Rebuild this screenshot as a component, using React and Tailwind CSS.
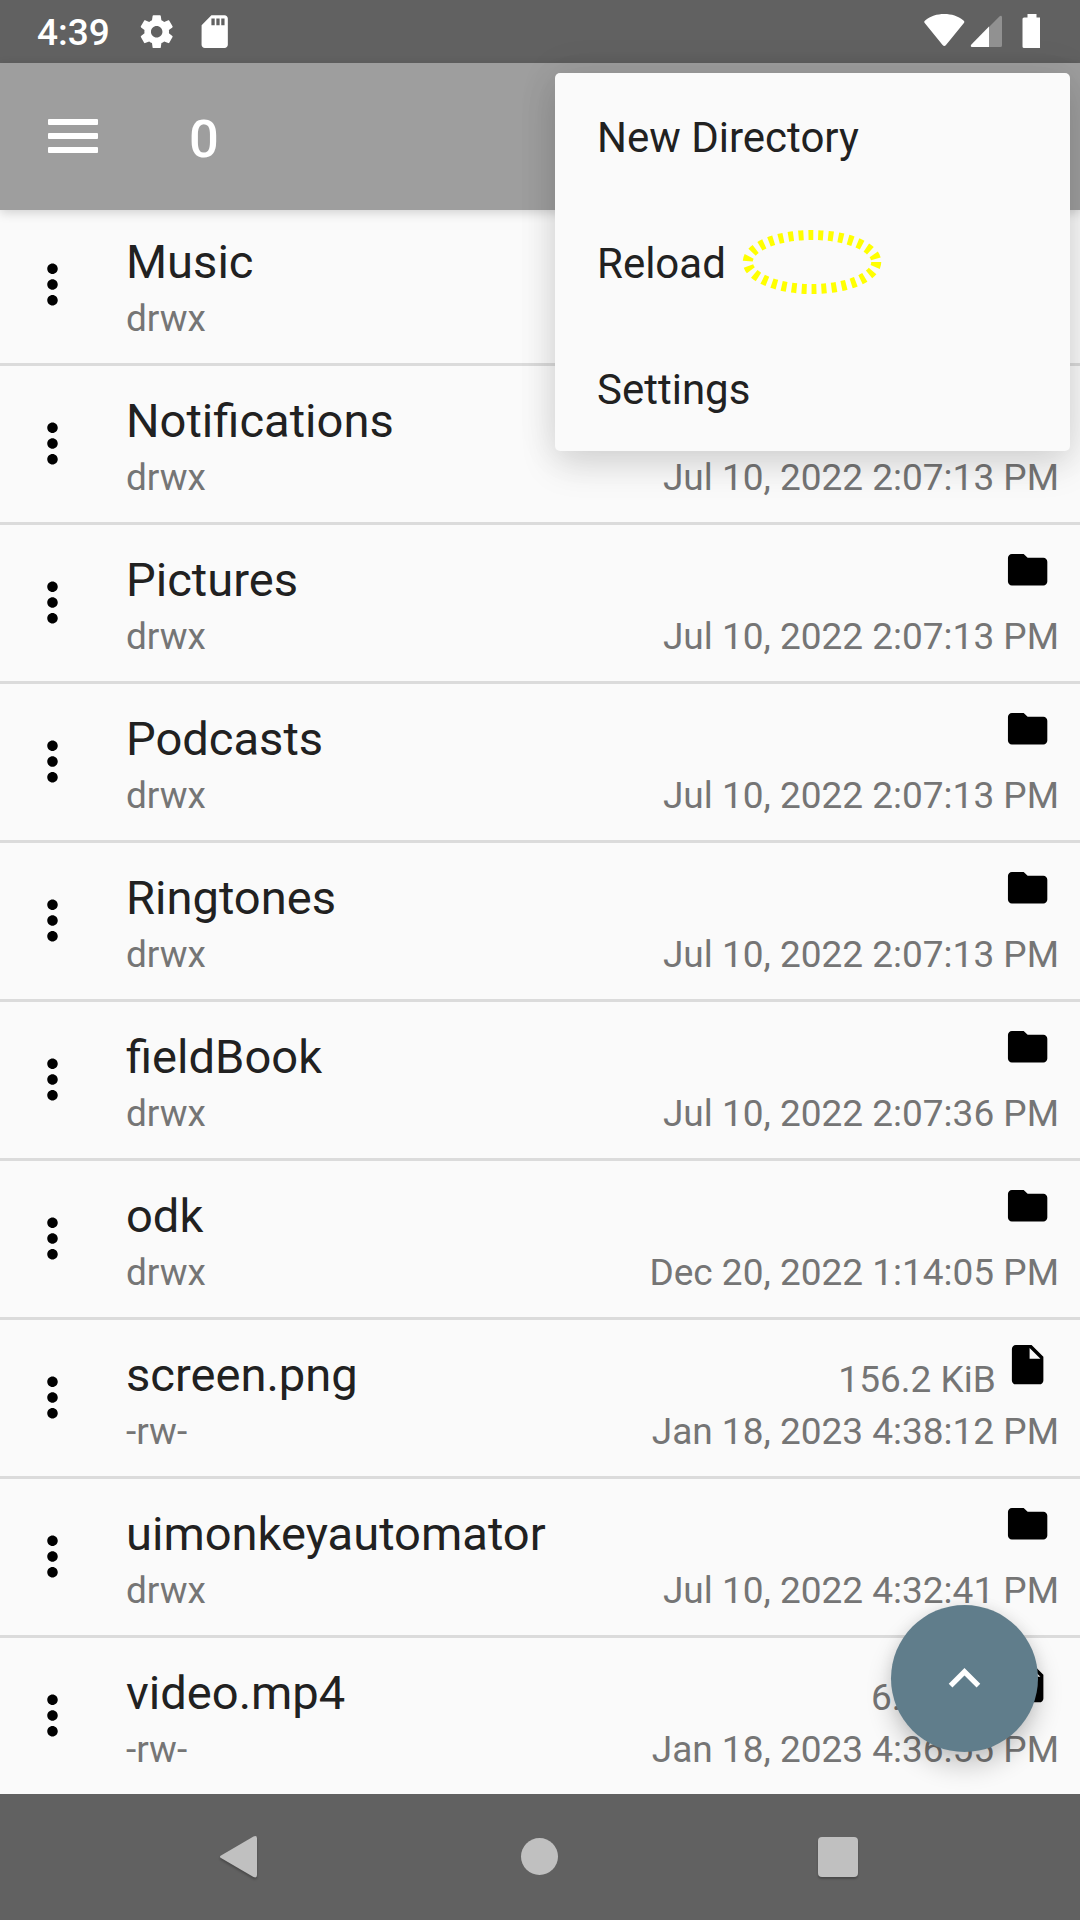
const entries = [
  { name: "Music", mode: "drwx", date: "Jul 10, 2022 2:07:13 PM" },
  { name: "Notifications", mode: "drwx", date: "Jul 10, 2022 2:07:13 PM" },
  { name: "Pictures", mode: "drwx", date: "Jul 10, 2022 2:07:13 PM" },
  { name: "Podcasts", mode: "drwx", date: "Jul 10, 2022 2:07:13 PM" },
  { name: "Ringtones", mode: "drwx", date: "Jul 10, 2022 2:07:13 PM" },
  { name: "fieldBook", mode: "drwx", date: "Jul 10, 2022 2:07:36 PM" },
  { name: "odk", mode: "drwx", date: "Dec 20, 2022 1:14:05 PM" },
  { name: "screen.png", mode: "-rw-", date: "Jan 18, 2023 4:38:12 PM", size: "156.2 KiB" },
  { name: "uimonkeyautomator", mode: "drwx", date: "Jul 10, 2022 4:32:41 PM" },
  { name: "video.mp4", mode: "-rw-", date: "Jan 18, 2023 4:36:55 PM", size: "6.5 MiB" },
];

function Icon({ d, className }) {
  return (
    <svg viewBox="0 0 24 24" fill="currentColor" className={className}>
      <path d={d} />
    </svg>
  );
}

const FOLDER = "M10 4H4c-1.1 0-1.99.9-1.99 2L2 18c0 1.1.9 2 2 2h16c1.1 0 2-.9 2-2V8c0-1.1-.9-2-2-2h-8l-2-2z";
const FILE = "M6 2c-1.1 0-1.99.9-1.99 2L4 20c0 1.1.89 2 1.99 2H18c1.1 0 2-.9 2-2V8l-6-6H6zm7 7V3.5L18.5 9H13z";
const MORE = "M12 8c1.1 0 2-.9 2-2s-.9-2-2-2-2 .9-2 2 .9 2 2 2zm0 2c-1.1 0-2 .9-2 2s.9 2 2 2 2-.9 2-2-.9-2-2-2zm0 6c-1.1 0-2 .9-2 2s.9 2 2 2 2-.9 2-2-.9-2-2-2z";
const GEAR = "M19.43 12.98c.04-.32.07-.64.07-.98s-.03-.66-.07-.98l2.11-1.65c.19-.15.24-.42.12-.64l-2-3.46c-.12-.22-.39-.3-.61-.22l-2.49 1c-.52-.4-1.08-.73-1.69-.98l-.38-2.65C14.46 2.18 14.25 2 14 2h-4c-.25 0-.46.18-.49.42l-.38 2.65c-.61.25-1.17.59-1.69.98l-2.49-1c-.23-.09-.49 0-.61.22l-2 3.46c-.13.22-.07.49.12.64l2.11 1.65c-.04.32-.07.65-.07.98s.03.66.07.98l-2.11 1.65c-.19.15-.24.42-.12.64l2 3.46c.12.22.39.3.61.22l2.49-1c.52.4 1.08.73 1.69.98l.38 2.65c.03.24.24.42.49.42h4c.25 0 .46-.18.49-.42l.38-2.65c.61-.25 1.17-.59 1.69-.98l2.49 1c.23.09.49 0 .61-.22l2-3.46c.12-.22.07-.49-.12-.64l-2.11-1.65zM12 15.5c-1.93 0-3.5-1.57-3.5-3.5s1.57-3.5 3.5-3.5 3.5 1.57 3.5 3.5-1.57 3.5-3.5 3.5z";
const SD_CARD = "M18 2h-8L4.02 8 4 20c0 1.1.9 2 2 2h12c1.1 0 2-.9 2-2V4c0-1.1-.9-2-2-2zm-6 6h-2V4h2v4zm3 0h-2V4h2v4zm3 0h-2V4h2v4z";
const CHEVRON_UP = "M12 8l-6 6 1.41 1.41L12 10.83l4.59 4.58L18 14z";

function StatusBar() {
  return (
    <header className="flex h-[63px] items-center bg-[#616161] pl-[37px] pr-[40px] text-white">
      <span className="w-[100px] pt-[2px] text-[37px] leading-[43px] font-medium">4:39</span>
      <Icon d={GEAR} className="h-[39.4px] w-[39.4px]" />
      <Icon d={SD_CARD} className="ml-[19px] h-[39.4px] w-[39.4px]" />
      <svg viewBox="0 0 120 36" className="mb-[3px] ml-auto h-[36px] w-[120px]">
        <path d="M4.9 11.2c-1-1.2-.8-2.2.5-3C10.500 4 17 2 24.300 2s13.800 2 18.900 6.200c1.300.8 1.500 1.800.5 3L26 32.900c-1.200 1.400-2.200 1.400-3.400 0z" fill="#fff" />
        <path d="M69 15v20h11.500q1.500 0 1.500-1.500V5.500c0-2-1.500-2-2.600-.9z" fill="#919191" />
        <path d="M69 14.500V35H52c-1.500 0-1.500-1.500-.6-2.500z" fill="#fff" />
        <path d="M107 2h9v3.500h3.400q1.600 0 1.600 1.500v27.500q0 1.500-1.600 1.500h-15.800q-1.600 0-1.600-1.500V7q0-1.500 1.600-1.500h3.400z" fill="#fff" className="[transform:translateX(0.5px)]" />
      </svg>
    </header>
  );
}

function Toolbar() {
  return (
    <div className="relative z-10 flex h-[147px] items-center bg-[#9e9e9e] pl-[48px] text-white shadow-[0_3px_10px_rgba(0,0,0,0.16)]">
      <div className="mb-[1px] flex w-[50px] flex-col gap-[8.400px]">
        <span className="h-[5.700px] rounded-[1px] bg-white" />
        <span className="h-[5.700px] rounded-[1px] bg-white" />
        <span className="h-[5.700px] rounded-[1px] bg-white" />
      </div>
      <h1 className="ml-[91px] pt-[5px] text-[52.5px] leading-[62px] font-medium">0</h1>
    </div>
  );
}

function Row({ entry }) {
  return (
    <li className="flex h-[159px] border-b-[3px] border-[#dbdbdb] pr-[21px]">
      <Icon d={MORE} className="mt-[46px] ml-[21px] h-[63px] w-[63px] text-black" />
      <div className="ml-[42px] flex-1 pt-[27px]">
        <div className="text-[47.1px] leading-[56px] text-[#212121]">{entry.name}</div>
        <div className="text-[37px] leading-[57px] text-[#757575]">{entry.mode}</div>
      </div>
      <div className="flex flex-col items-end text-[37px] text-[#757575]">
        <div className="flex h-[83px] items-start">
          {entry.size && <span className="mt-[38px] mr-[8px] leading-[43px]">{entry.size}</span>}
          <Icon
            d={entry.size ? FILE : FOLDER}
            className="mt-[20.6px] mr-[8px] h-[47.25px] w-[47.25px] text-black"
          />
        </div>
        <div className="leading-[57px] whitespace-nowrap">{entry.date}</div>
      </div>
    </li>
  );
}

function OverflowMenu() {
  return (
    <div className="absolute top-[73px] left-[555px] z-20 flex h-[378px] w-[515px] flex-col rounded-[5px] bg-[#fafafa] text-[42px] text-[#212121] shadow-[0_14px_36px_rgba(0,0,0,0.13),0_0_42px_rgba(0,0,0,0.08)]">
      <div className="flex h-[126px] items-center pt-[2px] pl-[42px]">New Directory</div>
      <div className="flex h-[126px] items-center pt-[2px] pl-[42px]">
        Reload
        <svg viewBox="0 0 140 66" className="mb-[3px] ml-[16.500px] h-[66px] w-[140px]">
          <ellipse cx="70" cy="33" rx="64.25" ry="27" fill="none" stroke="#ffff00" strokeWidth="10" strokeDasharray="5 5" />
        </svg>
      </div>
      <div className="flex h-[126px] items-center pt-[2px] pl-[42px]">Settings</div>
    </div>
  );
}

function NavBar() {
  return (
    <nav className="flex h-[126px] items-center justify-between bg-[#616161] pr-[222px] pb-[1px] pl-[218px] text-[#c0c0c0]">
      <svg viewBox="0 0 42 48" className="h-[48px] w-[42px] drop-shadow-[0_2px_1px_rgba(0,0,0,0.25)]">
        <path d="M3 22.500 35.500 3.500Q39 2 39 5.500V42q0 3.500-3.500 2L3 25Q1 23.700 3 22.500z" fill="currentColor" />
      </svg>
      <span className="h-[37px] w-[37px] rounded-full bg-[#c0c0c0]" />
      <span className="h-[40px] w-[40px] rounded-[4px] bg-[#c0c0c0] shadow-[0_2px_2px_rgba(0,0,0,0.25)]" />
    </nav>
  );
}

export default function App() {
  return (
    <div className="relative flex h-[1920px] w-[1080px] flex-col overflow-hidden bg-[#fafafa] font-['Roboto',sans-serif]">
      <StatusBar />
      <Toolbar />
      <main className="h-[1584px] overflow-hidden">
        <ul className="-mt-[3px]">
          {entries.map((entry) => (
            <Row key={entry.name} entry={entry} />
          ))}
        </ul>
      </main>
      <NavBar />
      <OverflowMenu />
      <button className="absolute top-[1605px] left-[891px] flex h-[147px] w-[147px] items-center justify-center rounded-full bg-[#607d8b] text-white shadow-[0_14px_26px_rgba(0,0,0,0.2),0_0_14px_rgba(0,0,0,0.08)]">
        <Icon d={CHEVRON_UP} className="h-[63px] w-[63px]" />
      </button>
    </div>
  );
}
